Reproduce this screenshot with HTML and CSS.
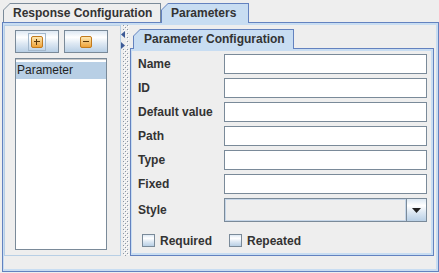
FILE: index.html
```html
<!DOCTYPE html>
<html>
<head>
<meta charset="utf-8">
<link rel="stylesheet" href="styles.css">
</head>
<body>
<div class="app">
  <div class="tabs">
    <div class="tab tab-a"><div class="tab-in">Response Configuration</div></div>
    <div class="tab tab-b sel"><div class="tab-in">Parameters</div></div>
  </div>
  <div class="pane outer">
    <div class="pane-body">
      <div class="split">
        <div class="left">
          <div class="btns">
            <button class="btn"><span class="focus-ring">
              <svg width="12" height="12" viewBox="0 0 12 12">
                <defs><linearGradient id="og1" x1="0" y1="0" x2="0" y2="1"><stop offset="0" stop-color="#fdebb8"/><stop offset="1" stop-color="#ee9f33"/></linearGradient></defs>
                <rect x="0.5" y="0.5" width="11" height="11" rx="1.5" fill="url(#og1)" stroke="#c27a1c"/>
                <rect x="3" y="5" width="6" height="1" fill="#5a3608"/>
                <rect x="5.5" y="2.5" width="1" height="6" fill="#5a3608" transform="translate(-0.5 0.5)"/>
              </svg></span>
            </button>
            <button class="btn">
              <svg width="12" height="12" viewBox="0 0 12 12">
                <defs><linearGradient id="og2" x1="0" y1="0" x2="0" y2="1"><stop offset="0" stop-color="#fdebb8"/><stop offset="1" stop-color="#ee9f33"/></linearGradient></defs>
                <rect x="0.5" y="0.5" width="11" height="11" rx="1.5" fill="url(#og2)" stroke="#c27a1c"/>
                <rect x="3" y="5" width="6" height="1" fill="#5a3608"/>
              </svg>
            </button>
          </div>
          <div class="list">
            <div class="row sel">Parameter</div>
          </div>
        </div>
        <div class="divider">
          <svg class="arrows" width="5" height="18" viewBox="0 0 5 18">
            <polygon points="0,3.5 4,0 4,7" fill="#3d5a96"/>
            <polygon points="0,11 4,14.5 0,18" fill="#3d5a96"/>
          </svg>
        </div>
        <div class="right">
          <div class="tabs itabs">
            <div class="tab tab-c sel"><div class="tab-in">Parameter Configuration</div></div>
          </div>
          <div class="pane inner">
            <div class="pane-body">
              <div class="form">
                <div class="lbl">Name</div><div class="field"></div>
                <div class="lbl">ID</div><div class="field"></div>
                <div class="lbl">Default value</div><div class="field"></div>
                <div class="lbl">Path</div><div class="field"></div>
                <div class="lbl">Type</div><div class="field"></div>
                <div class="lbl">Fixed</div><div class="field"></div>
                <div class="lbl">Style</div>
                <div class="combo">
                  <div class="combo-val"></div>
                  <div class="combo-btn">
                    <svg width="9" height="5" viewBox="0 0 9 5"><polygon points="0,0 9,0 4.5,5" fill="#222"/></svg>
                  </div>
                </div>
              </div>
              <div class="checks">
                <div class="check"><span class="box"></span><span>Required</span></div>
                <div class="check"><span class="box"></span><span>Repeated</span></div>
              </div>
            </div>
          </div>
        </div>
      </div>
    </div>
  </div>
</div>
</body>
</html>
```
FILE: styles.css
```css
* { box-sizing: border-box; }

body {
  margin: 0;
  background: #eeeeee;
  font: bold 12px "Liberation Sans", Arial, sans-serif;
  color: #333333;
}

.app {
  width: 439px;
  height: 273px;
  padding-left: 2px;
}

.tabs {
  display: flex;
  align-items: flex-end;
  height: 22px;
  padding-left: 1px;
}

.tab {
  height: 19px;
  background: #7a8a99;
  padding: 1px 1px 0 1px;
  clip-path: polygon(0 7px, 7px 0, 100% 0, 100% 100%, 0 100%);
}

.tab-in {
  height: 100%;
  background: #eeeeee;
  clip-path: polygon(0 6px, 6px 0, 100% 0, 100% 100%, 0 100%);
  padding-left: 9px;
  line-height: 18px;
  white-space: nowrap;
}

.tab.sel {
  height: 20px;
  margin-bottom: -1px;
  position: relative;
  z-index: 1;
  background: #6382bf;
}

.tab.sel .tab-in { background: #c8ddf2; }

.tab-a { width: 158px; }
.tab-b { width: 88px; }
.tab-c { width: 161px; }
.tab-c .tab-in { padding-left: 10px; }

.pane {
  border: 1px solid #6382bf;
  background: #c8ddf2;
  padding: 2px 2px 2px 1px;
}

.pane-body {
  background: #eeeeee;
  height: 100%;
}

.outer {
  width: 437px;
  height: 250px;
}

.split {
  display: flex;
  width: 430px;
  height: 231px;
}

.left {
  width: 117px;
  border: 1px solid #b8cfe5;
  padding: 4px 0 0 10px;
  display: flex;
  flex-direction: column;
}

.btns {
  display: flex;
  gap: 5px;
}

.btn {
  width: 44px;
  height: 23px;
  padding: 0;
  border: 1px solid #7a8a99;
  background: linear-gradient(#dde8f3 0%, #ffffff 30%, #dde8f3 60%, #b8cfe5 100%);
  display: flex;
  align-items: center;
  justify-content: center;
}

.btn svg { display: block; }

.focus-ring {
  display: block;
  border: 1px solid #a3b8cc;
  padding: 2px;
}

.list {
  margin-top: 5px;
  width: 92px;
  height: 192px;
  border: 1px solid #7a8a99;
  box-shadow: inset 0 1px 0 #c8c8c8;
  background: #ffffff;
  padding-top: 3px;
}

.row {
  height: 17px;
  line-height: 17px;
  padding-left: 1px;
  font-weight: normal;
  color: #222;
}

.row.sel { background: #b8cfe5; }

.divider {
  width: 9px;
  position: relative;
  padding: 0 1px 0 2px;
  background-clip: content-box;
  background-origin: content-box;
  background-image:
    conic-gradient(from 270deg at 1px 1px, #8a96a6 25%, transparent 0),
    conic-gradient(from 270deg at 1px 1px, #8a96a6 25%, transparent 0),
    conic-gradient(from 270deg at 1px 1px, #ffffff 25%, transparent 0),
    conic-gradient(from 270deg at 1px 1px, #ffffff 25%, transparent 0);
  background-size: 4px 4px;
  background-position: 0 0, 2px 2px, 1px 1px, 3px 3px;
}

.arrows {
  position: absolute;
  left: 0;
  top: 6px;
  background: #eeeeee;
}

.right {
  width: 304px;
  display: flex;
  flex-direction: column;
}

.itabs {
  height: 23px;
  padding-left: 3px;
  flex: none;
}

.inner {
  flex: 1;
}

.form {
  display: grid;
  grid-template-columns: 86px 203px;
  grid-template-rows: repeat(6, 20px) 24px;
  row-gap: 4px;
  align-items: center;
  padding: 3px 0 0 6px;
}

.lbl { white-space: nowrap; }

.field {
  height: 20px;
  border: 1px solid #7a8a99;
  background: #ffffff;
}

.combo {
  height: 24px;
  display: flex;
  border: 1px solid #7a8a99;
  background: #eeeeee;
}

.combo-val {
  flex: 1;
  box-shadow: inset 1px 1px 0 #c6d6e8, inset -1px -1px 0 #c6d6e8;
}

.combo-btn {
  width: 20px;
  border-left: 1px solid #7a8a99;
  background: linear-gradient(#dde8f3 0%, #ffffff 30%, #dde8f3 60%, #b8cfe5 100%);
  display: flex;
  align-items: center;
  justify-content: center;
}

.combo-btn svg { display: block; }

.checks {
  display: flex;
  align-items: center;
  height: 13px;
  margin-top: 12px;
  padding-left: 10px;
}

.check {
  display: flex;
  align-items: center;
  gap: 5px;
  width: 87px;
  white-space: nowrap;
}

.box {
  width: 13px;
  height: 13px;
  flex: none;
  border: 1px solid #7a8a99;
  background: linear-gradient(#dde8f3 0%, #ffffff 30%, #dde8f3 60%, #b8cfe5 100%);
}
```
